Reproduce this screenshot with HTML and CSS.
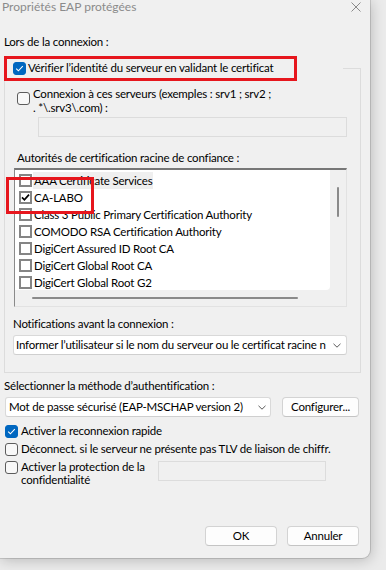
FILE: index.html
```html
<!DOCTYPE html>
<html lang="fr">
<head>
<meta charset="utf-8">
<title>Propriétés EAP protégées</title>
<link rel="stylesheet" href="styles.css">
</head>
<body>
<div class="window">
  <div class="titlebar">
    <span class="title">Propriétés EAP protégées</span>
    <svg class="close" viewBox="0 0 10 10" width="10" height="10"><path d="M0.5 0.5 L9.5 9.5 M9.5 0.5 L0.5 9.5" stroke="#8a8a8a" stroke-width="1" fill="none"/></svg>
  </div>

  <div class="lbl lbl-top">Lors de la connexion :</div>

  <div class="group">
    <div class="legend">
      <span class="wcb checked"><svg viewBox="0 0 13 13" width="13" height="13"><path d="M3.2 6.6 L5.4 8.8 L9.8 4.2" stroke="#fff" stroke-width="1.1" fill="none"/></svg></span>
      <span class="lbl">Vérifier l’identité du serveur en validant le certificat</span>
    </div>

    <div class="servers">
      <span class="wcb servers-cb"></span>
      <span class="servers-text">Connexion à ces serveurs (exemples : srv1 ; srv2 ;<br>. *\.srv3\.com) :</span>
    </div>
    <div class="textbox servers-input"></div>

    <div class="lbl lbl-auth">Autorités de certification racine de confiance :</div>
    <div class="listbox">
      <div class="list-main">
        <div class="list-items">
          <div class="item"><span class="ccb"></span><span class="item-text selected">AAA Certificate Services</span></div>
          <div class="item"><span class="ccb"><svg viewBox="0 0 9 9" width="9" height="9"><path d="M1 4.4 L3.4 6.8 L8 1.6" stroke="#000" stroke-width="1.7" fill="none"/></svg></span><span class="item-text">CA-LABO</span></div>
          <div class="item"><span class="ccb"></span><span class="item-text">Class 3 Public Primary Certification Authority</span></div>
          <div class="item"><span class="ccb"></span><span class="item-text">COMODO RSA Certification Authority</span></div>
          <div class="item"><span class="ccb"></span><span class="item-text">DigiCert Assured ID Root CA</span></div>
          <div class="item"><span class="ccb"></span><span class="item-text">DigiCert Global Root CA</span></div>
          <div class="item"><span class="ccb"></span><span class="item-text">DigiCert Global Root G2</span></div>
          <div class="item"><span class="ccb"></span><span class="item-text">DigiCert Global Root G3</span></div>
        </div>
        <div class="vscroll"><div class="vthumb"></div></div>
      </div>
      <div class="hscroll"><div class="hthumb"></div></div>
    </div>

    <div class="lbl lbl-notif">Notifications avant la connexion :</div>
    <div class="combo combo-notif">
      <span class="combo-text">Informer l’utilisateur si le nom du serveur ou le certificat racine n’est pas autorisé</span>
      <svg class="chev" viewBox="0 0 8 5" width="8" height="5"><path d="M0.5 0.8 L4 4.2 L7.5 0.8" stroke="#5a5a5a" stroke-width="1" fill="none"/></svg>
    </div>
  </div>

  <div class="lbl lbl-method">Sélectionner la méthode d’authentification :</div>
  <div class="method-row">
    <div class="combo combo-method">
      <span class="combo-text">Mot de passe sécurisé (EAP-MSCHAP version 2)</span>
      <svg class="chev" viewBox="0 0 8 5" width="8" height="5"><path d="M0.5 0.8 L4 4.2 L7.5 0.8" stroke="#5a5a5a" stroke-width="1" fill="none"/></svg>
    </div>
    <div class="btn btn-config">Configurer...</div>
  </div>

  <div class="checks">
    <div class="check-row">
      <span class="wcb checked"><svg viewBox="0 0 13 13" width="13" height="13"><path d="M3.2 6.6 L5.4 8.8 L9.8 4.2" stroke="#fff" stroke-width="1.1" fill="none"/></svg></span>
      <span class="lbl">Activer la reconnexion rapide</span>
    </div>
    <div class="check-row">
      <span class="wcb"></span>
      <span class="lbl">Déconnect. si le serveur ne présente pas TLV de liaison de chiffr.</span>
    </div>
    <div class="check-row check-row-top">
      <span class="wcb privacy-cb"></span>
      <span class="privacy-text">Activer la protection de la<br>confidentialité</span>
      <div class="textbox privacy-input"></div>
    </div>
  </div>

  <div class="buttons">
    <div class="btn">OK</div>
    <div class="btn">Annuler</div>
  </div>

  <div class="redbox red-verify"></div>
  <div class="redbox red-ca"></div>
</div>
</body>
</html>
```

FILE: styles.css
```css
* { box-sizing: border-box; }
html, body { margin: 0; padding: 0; }
body {
  width: 386px;
  height: 570px;
  overflow: hidden;
  background: #ebebeb;
  font-family: Lato, "Noto Sans", sans-serif;
  font-size: 11.5px;
  letter-spacing: -0.2px;
  color: #000;
}
.window {
  position: relative;
  width: 370px;
  height: 558px;
  background: #f0f0f0;
  border-bottom-right-radius: 8px;
  box-shadow: 0 0 0 1px rgba(0,0,0,0.13), 1px 2px 14px rgba(0,0,0,0.22);
  display: flex;
  flex-direction: column;
  align-items: flex-start;
}
.titlebar {
  width: 100%;
  height: 22px;
  flex: none;
  display: flex;
  justify-content: space-between;
  align-items: flex-start;
  padding: 0 9px 0 2px;
}
.title { line-height: 14px; color: #8b8b8b; font-size: 12px; letter-spacing: 0; }
.close { margin-top: 2px; }
.lbl { line-height: 14px; white-space: nowrap; }
.lbl-top { margin: 13px 0 0 4px; }

.group {
  flex: none;
  margin: 19px 0 0 4px;
  width: 357px;
  height: 305px;
  border: 1px solid #dcdcdc;
}
.legend {
  margin-top: -8px;
  width: 338px;
  height: 14px;
  background: #f0f0f0;
  display: flex;
  align-items: center;
  gap: 2px;
  padding-left: 8px;
}
.wcb {
  flex: none;
  width: 13px;
  height: 13px;
  border: 1px solid #5c5c5c;
  border-radius: 3px;
  background: #f8f8f8;
  display: flex;
}
.wcb.checked { background: #0067c0; border-color: #0067c0; }
.wcb svg { margin: -1px; }

.servers {
  display: flex;
  align-items: flex-start;
  margin: 12px 0 0 12px;
}
.servers-cb { margin-top: 5px; }
.servers-text { margin-left: 3px; line-height: 13.5px; white-space: nowrap; }
.textbox {
  border: 1px solid #dcdcdc;
  background: #f0f0f0;
  height: 20px;
  flex: none;
}
.servers-input { margin: 3px 0 0 33px; width: 309px; }

.lbl-auth { margin: 14px 0 0 12px; }
.listbox {
  margin: 3px 0 0 9px;
  width: 333px;
  height: 139px;
  border-top: 2px solid #777;
  border-left: 1px solid #8a8a8a;
  border-right: 1px solid #e2e2e2;
  border-bottom: 1px solid #e2e2e2;
  background: #f0f0f0;
  display: flex;
  flex-direction: column;
}
.list-main { display: flex; height: 120px; flex: none; }
.list-items {
  width: 315px;
  height: 120px;
  background: #fff;
  border-bottom-right-radius: 4px;
  overflow: hidden;
  padding-top: 2px;
}
.item {
  display: flex;
  align-items: center;
  height: 17px;
  padding-left: 4px;
  white-space: nowrap;
}
.ccb {
  flex: none;
  width: 13px;
  height: 13px;
  border: 2px solid #858585;
  background: #fff;
  display: flex;
  align-items: center;
  justify-content: center;
}
.item-text { margin-left: 1px; padding: 0 1px; line-height: 17px; }
.item-text.selected { background: #efefef; }
.vscroll { flex: 1; display: flex; justify-content: center; padding-top: 17px; }
.vthumb { width: 2px; height: 30px; border-radius: 1px; background: #8a8a8a; }
.hscroll { flex: 1; padding: 7px 0 0 17px; }
.hthumb { width: 266px; height: 2px; border-radius: 1px; background: #8a8a8a; }

.lbl-notif { margin: 10px 0 0 8px; }
.combo {
  display: flex;
  align-items: center;
  height: 20px;
  background: #fff;
  border: 1px solid #d9d9d9;
  border-bottom-color: #cfcfcf;
  border-radius: 3px;
  flex: none;
}
.combo-text {
  flex: 1;
  overflow: hidden;
  white-space: nowrap;
  line-height: 18px;
  padding-left: 2px;
}
.chev { flex: none; }
.combo-notif { margin: 4px 0 0 8px; width: 334px; }
.combo-notif .chev { margin: 0 5px 0 7px; }

.lbl-method { margin: 6px 0 0 4px; }
.method-row { display: flex; gap: 11px; margin: 4px 0 0 5px; }
.combo-method { width: 266px; }
.combo-method .combo-text { padding-left: 3px; }
.combo-method .chev { margin: 0 4px 0 6px; }
.btn {
  flex: none;
  width: 72px;
  height: 20px;
  background: #fdfdfd;
  border: 1px solid #d3d3d3;
  border-bottom-color: #c4c4c4;
  border-radius: 4px;
  text-align: center;
  line-height: 18px;
}
.btn-config { width: 77px; }

.checks { margin: 7px 0 0 5px; display: flex; flex-direction: column; gap: 4px; }
.check-row { display: flex; align-items: center; gap: 3px; }
.check-row-top { align-items: flex-start; }
.privacy-cb { margin-top: 1px; }
.privacy-text { width: 137px; line-height: 13px; white-space: nowrap; }
.privacy-input { width: 168px; margin: 1px 0 0 -3px; }

.buttons {
  margin: auto 0 12px 0;
  width: 100%;
  display: flex;
  justify-content: flex-end;
  gap: 10px;
  padding-right: 11px;
}

.redbox {
  position: absolute;
  border: 3px solid #e6161d;
  pointer-events: none;
}
.red-verify { left: 4px; top: 56px; width: 293px; height: 25px; }
.red-ca { left: 6px; top: 177px; width: 88px; height: 37px; }
```
